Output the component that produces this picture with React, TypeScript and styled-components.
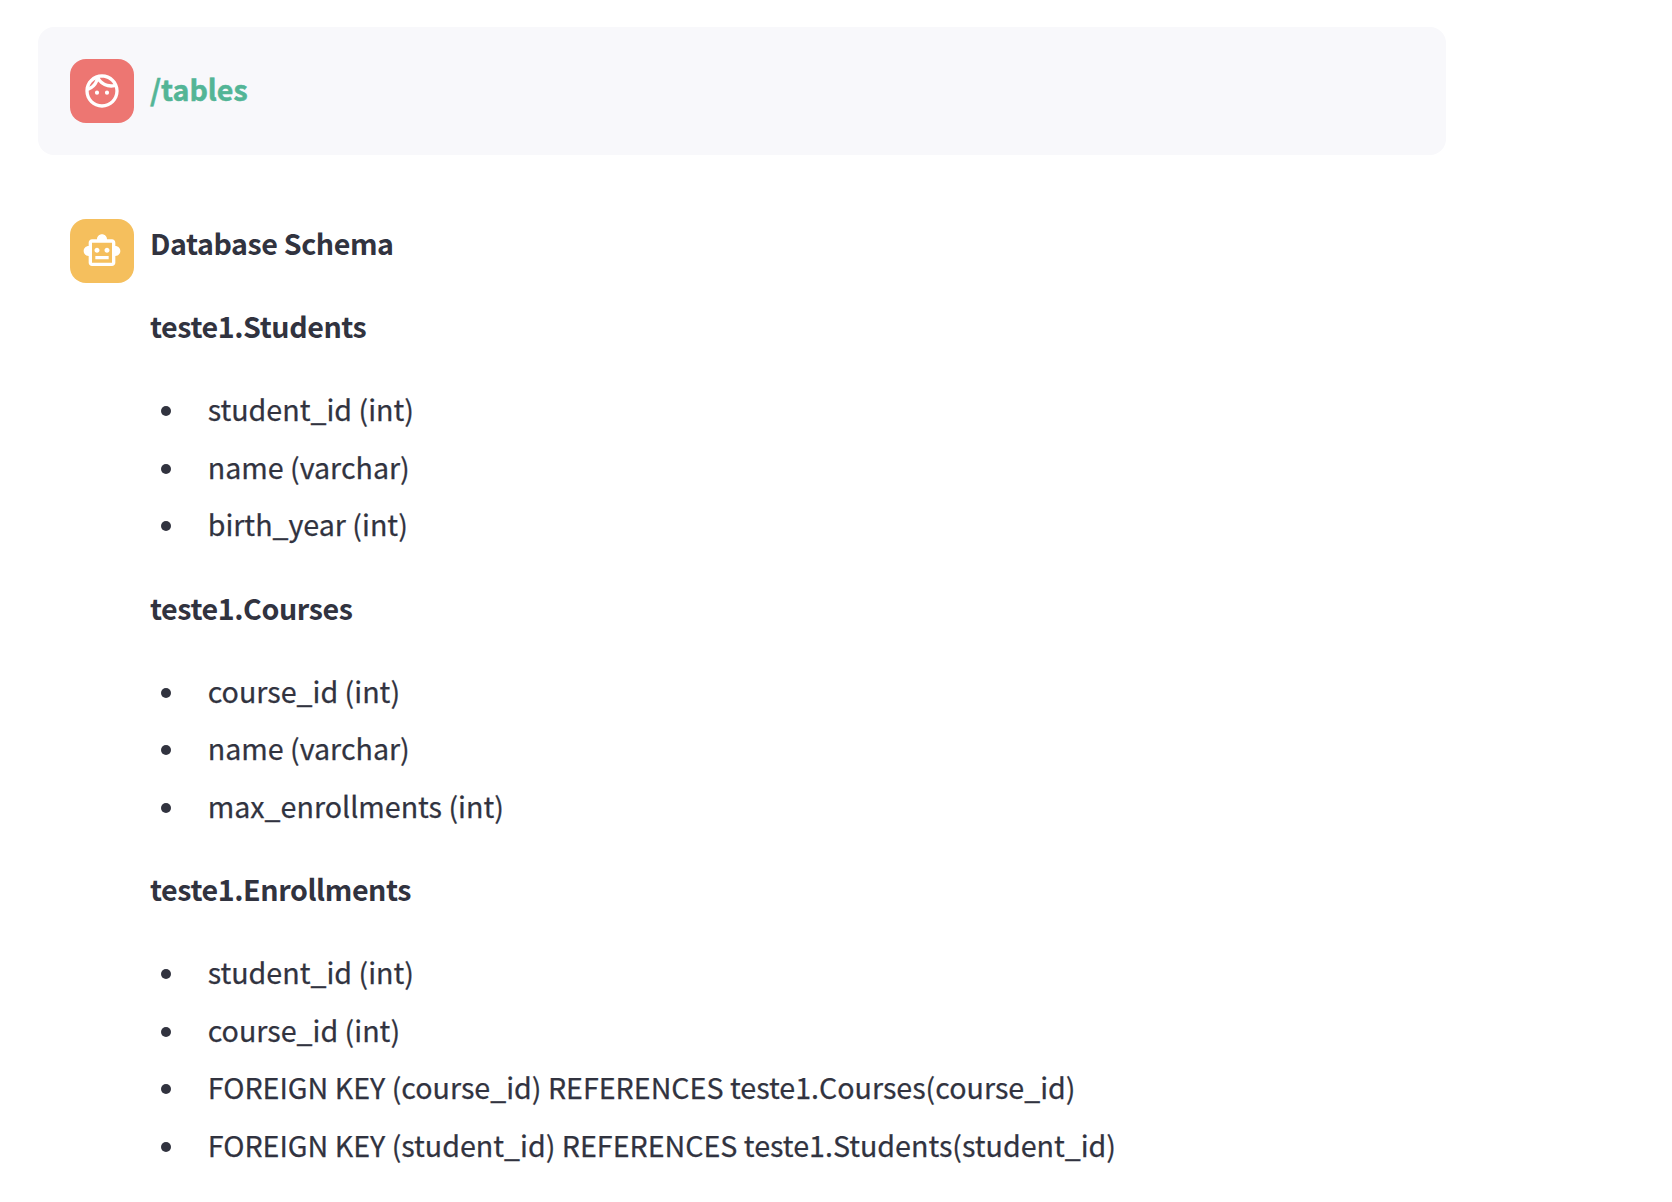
import React from "react";
import styled, { createGlobalStyle } from "styled-components";
import { MdOutlineFace, MdOutlineSmartToy } from "react-icons/md";

const GlobalStyle = createGlobalStyle`
  * { box-sizing: border-box; }
  body {
    margin: 0;
    background: #ffffff;
    color: #31333f;
    font-family: "Source Sans Pro", "Noto Sans CJK SC", sans-serif;
    font-size: 28.64px;
    line-height: 51.2px;
    -webkit-text-stroke: 0.25px currentColor;
  }
`;

const Chat = styled.main`
  display: flex;
  flex-direction: column;
  gap: 32px;
  width: 1408px;
  margin: 27px 0 0 38px;
`;

const Message = styled.article<{ $filled?: boolean }>`
  display: flex;
  align-items: flex-start;
  gap: 16px;
  padding: 32px;
  border-radius: 16px;
  background: ${(p) => (p.$filled ? "#f8f8fb" : "transparent")};
`;

const Avatar = styled.div<{ $color: string }>`
  display: flex;
  align-items: center;
  justify-content: center;
  flex: none;
  width: 64px;
  height: 64px;
  border-radius: 16px;
  background: ${(p) => p.$color};
  color: #ffffff;
  font-size: 40px;
`;

const Command = styled.strong`
  align-self: center;
  margin-bottom: 4px;
  color: #53b596;
  font-weight: 700;
  -webkit-text-stroke-width: 0.5px;
`;

const Content = styled.div`
  display: flex;
  flex-direction: column;
  gap: 32px;
  margin-top: -2.3px;
`;

const Title = styled.p`
  margin: 0;
  font-weight: 700;
  letter-spacing: -0.41px;
  -webkit-text-stroke-width: 0;
`;

const Columns = styled.ul`
  display: flex;
  flex-direction: column;
  gap: 6.4px;
  margin: 0;
  padding: 0 0 0 11px;
  list-style: none;
`;

const Column = styled.li`
  display: flex;
  align-items: center;
  gap: 36.7px;
  white-space: nowrap;

  &::before {
    content: "";
    width: 10px;
    height: 10px;
    margin-top: 4.6px;
    border-radius: 50%;
    background: #31333f;
  }
`;

const tables = [
  { name: "teste1.Students", columns: ["student_id (int)", "name (varchar)", "birth_year (int)"] },
  { name: "teste1.Courses", columns: ["course_id (int)", "name (varchar)", "max_enrollments (int)"] },
  {
    name: "teste1.Enrollments",
    columns: [
      "student_id (int)",
      "course_id (int)",
      "FOREIGN KEY (course_id) REFERENCES teste1.Courses(course_id)",
      "FOREIGN KEY (student_id) REFERENCES teste1.Students(student_id)",
    ],
  },
];

export default function App() {
  return (
    <>
      <GlobalStyle />
      <Chat>
        <Message $filled>
          <Avatar $color="#ed7672">
            <MdOutlineFace />
          </Avatar>
          <Command>/tables</Command>
        </Message>
        <Message>
          <Avatar $color="#f5bf5d">
            <MdOutlineSmartToy />
          </Avatar>
          <Content>
            <Title>Database Schema</Title>
            {tables.map((table) => (
              <React.Fragment key={table.name}>
                <Title>{table.name}</Title>
                <Columns>
                  {table.columns.map((column) => (
                    <Column key={column}>{column}</Column>
                  ))}
                </Columns>
              </React.Fragment>
            ))}
          </Content>
        </Message>
      </Chat>
    </>
  );
}
